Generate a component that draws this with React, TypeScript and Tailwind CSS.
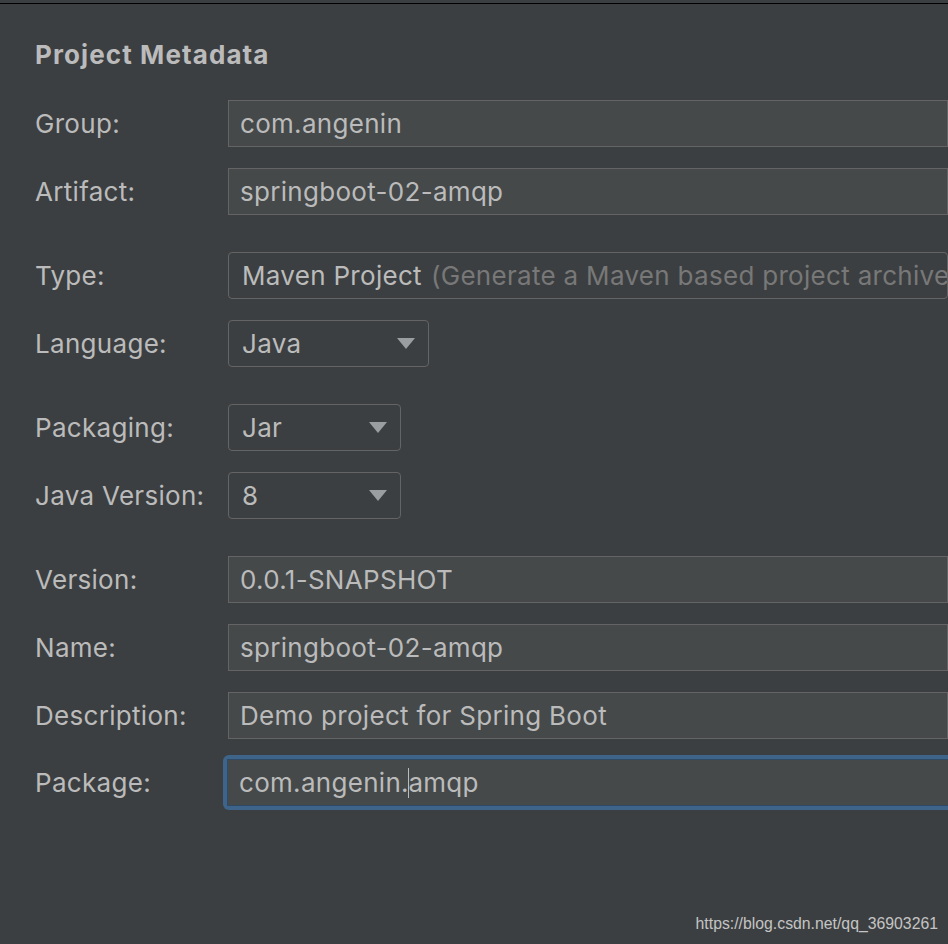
import React from 'react';

const font = { fontFamily: 'Inter, "Noto Sans", "Liberation Sans", sans-serif' };

function Label({ text }: { text: string }) {
  return <div className="w-[193px] shrink-0 text-[26px] text-[#bbbbbb] tracking-[0.3px]">{text}</div>;
}

function TextField({ value, focused }: { value: React.ReactNode; focused?: boolean }) {
  const field = (
    <div className="h-[47px] w-[760px] border border-[#646464] bg-[#45494a] pl-[11px] flex items-center text-[26px] text-[#bbbbbb] tracking-[0.3px]">
      {value}
    </div>
  );
  if (!focused) return field;
  return (
    <div className="-ml-[5px] -my-[5px] p-[4px] rounded-[6px] bg-[#3f6489]">
      <div className="border border-[#2f4a66]">
        <div className="h-[45px] w-[760px] bg-[#45494a] pl-[11px] flex items-center text-[26px] text-[#bbbbbb] tracking-[0.3px]">
          {value}
        </div>
      </div>
    </div>
  );
}

function Combo({ value, width }: { value: string; width: string }) {
  return (
    <div className={`h-[47px] ${width} rounded-[4px] border border-[#646464] flex items-center justify-between pl-[13px] pr-[13px] text-[26px] text-[#bbbbbb] tracking-[0.3px]`}>
      <span>{value}</span>
      <svg width="18" height="11" viewBox="0 0 18 11">
        <polygon points="0,0 18,0 9,11" fill="#9b9ea1" />
      </svg>
    </div>
  );
}

function Row({ label, children }: { label: string; children: React.ReactNode }) {
  return (
    <div className="flex items-center">
      <Label text={label} />
      {children}
    </div>
  );
}

export default function App() {
  return (
    <div className="w-[948px] h-[944px] overflow-hidden bg-[#3c3f41] relative" style={font}>
      <div className="h-[4px] border-b-[1.5px] border-black" />
      <div className="pl-[35px] pt-[36px]">
        <h2 className="text-[26px] font-bold text-[#bbbbbb] tracking-[1.1px] leading-[30px]">Project Metadata</h2>
        <div className="mt-[30px] flex flex-col gap-[37px] whitespace-nowrap">
          <div className="flex flex-col gap-[21px]">
            <Row label="Group:"><TextField value="com.angenin" /></Row>
            <Row label="Artifact:"><TextField value="springboot-02-amqp" /></Row>
          </div>
          <div className="flex flex-col gap-[21px]">
            <Row label="Type:">
              {/* the hint runs past the window edge in the original too */}
              <div className="h-[47px] w-[760px] rounded-[4px] border border-[#646464] flex items-center pl-[13px] text-[26px] tracking-[0.3px] overflow-hidden">
                <span className="text-[#bbbbbb]">Maven Project</span>
                <span className="text-[#787878] ml-[9px]">(Generate a Maven based project archive.)</span>
              </div>
            </Row>
            <Row label="Language:"><Combo value="Java" width="w-[201px]" /></Row>
          </div>
          <div className="flex flex-col gap-[21px]">
            <Row label="Packaging:"><Combo value="Jar" width="w-[173px]" /></Row>
            <Row label="Java Version:"><Combo value="8" width="w-[173px]" /></Row>
          </div>
          <div className="flex flex-col gap-[21px]">
            <Row label="Version:"><TextField value="0.0.1-SNAPSHOT" /></Row>
            <Row label="Name:"><TextField value="springboot-02-amqp" /></Row>
            <Row label="Description:"><TextField value="Demo project for Spring Boot" /></Row>
            <Row label="Package:">
              <TextField
                focused
                value={
                  <>
                    <span>com.angenin.</span>
                    <span className="inline-block w-[1.5px] h-[30px] bg-[#bbbbbb] -mx-[1px]" />
                    <span>amqp</span>
                  </>
                }
              />
            </Row>
          </div>
        </div>
      </div>
      <div
        className="absolute right-[10px] bottom-[8px] text-[15.8px] text-[#c4c4c4]"
        style={{ fontFamily: '"Liberation Sans", Arial, sans-serif' }}
      >
        https://blog.csdn.net/qq_36903261
      </div>
    </div>
  );
}
